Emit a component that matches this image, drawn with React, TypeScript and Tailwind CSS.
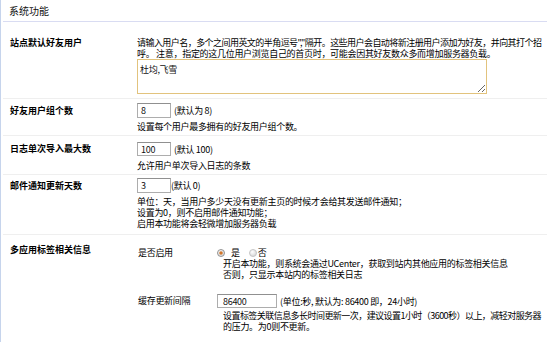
import React from "react";

const Radio = ({ checked }: { checked?: boolean }) => (
  <svg width="8" height="8" viewBox="0 0 8 8" className="shrink-0">
    <defs>
      <radialGradient id={checked ? "rgOn" : "rgOff"} cx="0.4" cy="0.35" r="0.7">
        <stop offset="0" stopColor="#ffffff" />
        <stop offset="1" stopColor="#d4d4d4" />
      </radialGradient>
    </defs>
    <circle cx="4" cy="4" r="3.5" fill={`url(#${checked ? "rgOn" : "rgOff"})`} stroke={checked ? "#8a8a8a" : "#c2c2c2"} strokeWidth="0.9" />
    {checked && <circle cx="4" cy="4" r="1.8" fill="#d0762c" />}
  </svg>
);

const Label = ({ children, lh }: { children: React.ReactNode; lh: string }) => (
  <div className={`w-[134px] shrink-0 pl-[7px] text-[9px] font-bold text-[#000] ${lh}`}>{children}</div>
);

export default function App() {
  return (
    <div className="w-[553px] h-[342px] overflow-hidden bg-white border-l border-[#c6d4ec] font-['Noto_Sans_CJK_SC','Noto_Sans',sans-serif] text-[#000]">
      <div className="mx-[2px] w-[544px]">
        <div className="h-[22px] border-b border-[#d9dcf2] pl-[6px] text-[10px] leading-[21px] text-[#111]">
          系统功能
        </div>

        {/* 站点默认好友用户 */}
        <div className="flex h-[77px] pt-[15px] border-b border-[#efefef]">
          <Label lh="leading-[11px]">站点默认好友用户</Label>
          <div className="text-[9px] tracking-[-0.3px] leading-[11px] whitespace-nowrap">
            <div className="tracking-[-0.55px]">请输入用户名，多个之间用英文的半角逗号","隔开。这些用户会自动将新注册用户添加为好友，并向其打个招</div>
            <div>呼。 注意，指定的这几位用户浏览自己的首页时，可能会因其好友数众多而增加服务器负载。</div>
            <textarea
              defaultValue="杜均,飞雪"
              className="block w-[350px] h-[35px] border border-[#e2c37d] bg-white pl-[2px] pt-[4px] text-[9px] tracking-[-0.3px] leading-[11px] text-[#111] outline-none"
            />
          </div>
        </div>

        {/* 好友用户组个数 */}
        <div className="flex h-[37px] pt-[4px] border-b border-[#efefef]">
          <Label lh="leading-[15px]">好友用户组个数</Label>
          <div className="text-[9px] tracking-[-0.3px] leading-[11px] whitespace-nowrap">
            <div className="flex items-center">
              <input
                defaultValue="8"
                className="w-[34px] h-[15px] border border-[#adadad] border-t-[#909090] px-[3px] text-[9px] text-[#111] outline-none"
              />
              <span className="ml-[3px]">(默认为 8)</span>
            </div>
            <div className="mt-[3px]">设置每个用户最多拥有的好友用户组个数。</div>
          </div>
        </div>

        {/* 日志单次导入最大数 */}
        <div className="flex h-[39px] pt-[6px] border-b border-[#efefef]">
          <Label lh="leading-[14px]">日志单次导入最大数</Label>
          <div className="text-[9px] tracking-[-0.3px] leading-[11px] whitespace-nowrap">
            <div className="flex items-center">
              <input
                defaultValue="100"
                className="w-[34px] h-[14px] border border-[#adadad] border-t-[#909090] px-[3px] text-[9px] text-[#111] outline-none"
              />
              <span className="ml-[3px]">(默认 100)</span>
            </div>
            <div className="mt-[4px]">允许用户单次导入日志的条数</div>
          </div>
        </div>

        {/* 邮件通知更新天数 */}
        <div className="flex h-[60px] pt-[3px] border-b border-[#efefef]">
          <Label lh="leading-[15px]">邮件通知更新天数</Label>
          <div className="text-[9px] tracking-[-0.3px] leading-[11px] whitespace-nowrap">
            <div className="flex items-center">
              <input
                defaultValue="3"
                className="w-[34px] h-[15px] border border-[#adadad] border-t-[#909090] px-[3px] text-[9px] text-[#111] outline-none"
              />
              <span>(默认 0)</span>
            </div>
            <div className="mt-[3px]">单位：天，当用户多少天没有更新主页的时候才会给其发送邮件通知；</div>
            <div>设置为0，则不启用邮件通知功能；</div>
            <div>启用本功能将会轻微增加服务器负载</div>
          </div>
        </div>

        {/* 多应用标签相关信息 */}
        <div className="flex pt-[7px]">
          <Label lh="leading-[15px]">多应用标签相关信息</Label>
          <div className="text-[9px] tracking-[-0.3px] leading-[11px] whitespace-nowrap">
            <div className="flex mt-[5px]">
              <div className="w-[80px] pl-[1px]">是否启用</div>
              <div>
                <div className="flex items-center">
                  <Radio checked />
                  <span className="ml-[6px]">是</span>
                  <span className="ml-[9px] flex items-center">
                    <Radio />
                  </span>
                  <span className="ml-[1px]">否</span>
                </div>
                <div className="pl-[6px]">开启本功能，则系统会通过UCenter，获取到站内其他应用的标签相关信息</div>
                <div className="pl-[6px]">否则，只显示本站内的标签相关日志</div>
              </div>
            </div>
            <div className="flex mt-[14px]">
              <div className="w-[80px] pl-[1px] leading-[14px]">缓存更新间隔</div>
              <div>
                <div className="flex items-center">
                  <input
                    defaultValue="86400"
                    className="w-[60px] h-[14px] border border-[#adadad] border-t-[#909090] px-[5px] text-[9px] text-[#111] outline-none"
                  />
                  <span className="ml-[3px]">(单位:秒, 默认为: 86400 即，24小时)</span>
                </div>
                <div className="mt-[2px] pl-[6px] tracking-[-0.55px]">设置标签关联信息多长时间更新一次，建议设置1小时（3600秒）以上，减轻对服务器</div>
                <div className="pl-[6px]">的压力。为0则不更新。</div>
              </div>
            </div>
          </div>
        </div>
      </div>
    </div>
  );
}
